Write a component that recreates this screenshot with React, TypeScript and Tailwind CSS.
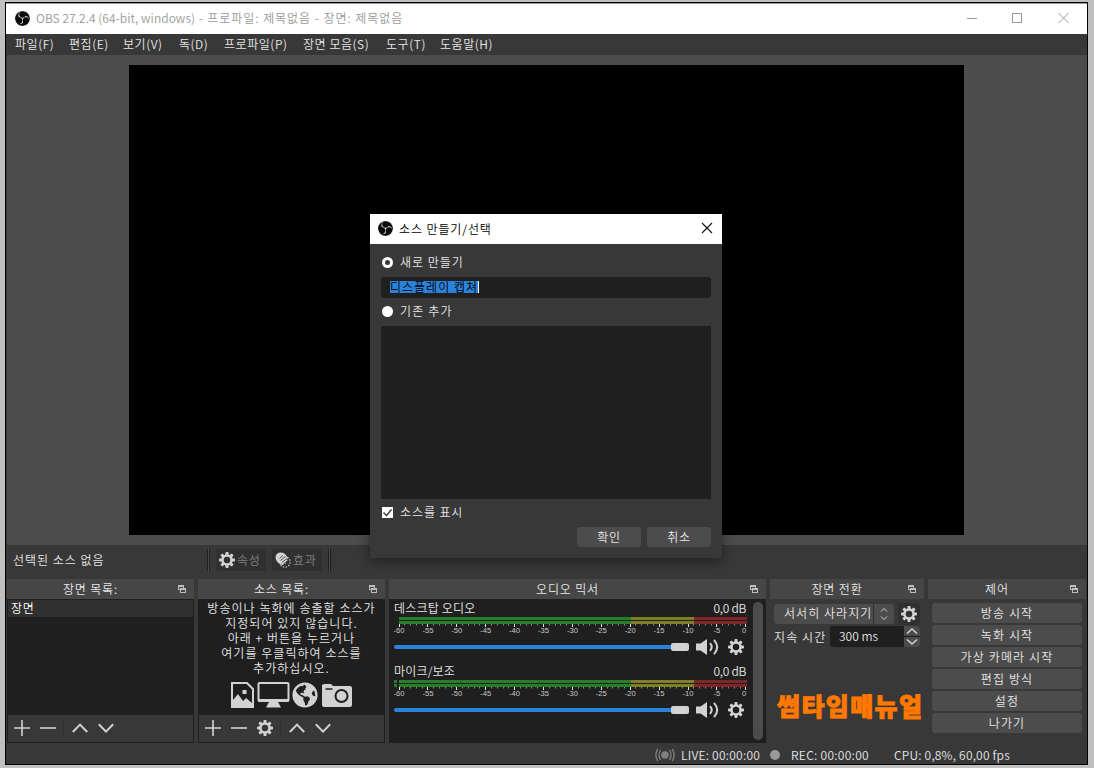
import React from 'react';
import { FaGlobeAmericas } from 'react-icons/fa';
import { SiObsstudio } from 'react-icons/si';

const TEETH = [0, 45, 90, 135, 180, 225, 270, 315];

const ObsLogo: React.FC = () => (
  <svg className="block w-[15px] h-[15px] shrink-0" viewBox="0 0 30 30">
    <circle cx="15" cy="15" r="15" fill="#0b0b0b" />
    <SiObsstudio x="-1.5" y="-1.5" size={33} color="#e8e8e8" />
  </svg>
);

const Gear: React.FC<{ className?: string }> = ({ className = '' }) => (
  <svg className={`block w-4 h-4 shrink-0 ${className}`} viewBox="0 0 32 32">
    <circle cx="16" cy="16" r="9" fill="none" stroke="#d2d2d2" strokeWidth="5" />
    {TEETH.map((a) => (
      <path key={a} transform={`rotate(${a} 16 16)`} d="M12.6 6 L13.4 0 H18.6 L19.4 6 Z" fill="#d2d2d2" />
    ))}
  </svg>
);

const Speaker: React.FC = () => (
  <svg className="block w-[23px] h-4 shrink-0" viewBox="0 0 23 16">
    <path d="M0 4.5 H4.5 L11 0 V16 L4.5 11.5 H0 Z" fill="#d2d2d2" />
    <path d="M14 4.2 Q17.4 8 14 11.8 M18 0.8 Q24.4 8 18 15.2" fill="none" stroke="#d2d2d2" strokeWidth="2" />
  </svg>
);

const PopOut: React.FC = () => (
  <svg className="absolute right-[8px] top-[6px] w-[8px] h-[8px]" viewBox="0 0 8 8">
    <path d="M0 0 H6 V3 H8 V8 H2 V5 H0 Z" fill="#bdbdbd" />
    <path d="M1 2 H5 V3 H2 V4 H1 Z M3 5 H7 V7 H3 Z" fill="#464646" />
  </svg>
);

const Plus = () => (
  <svg className="block w-4 h-4" viewBox="0 0 16 16"><path d="M8 0 V16 M0 8 H16" stroke="#d2d2d2" strokeWidth="1.6" /></svg>
);
const Minus = () => (
  <svg className="block w-4 h-4" viewBox="0 0 16 16"><path d="M0 8 H16" stroke="#d2d2d2" strokeWidth="1.6" /></svg>
);
const Up = () => (
  <svg className="block w-4 h-4" viewBox="0 0 16 16"><path d="M0.8 12 L8 4.6 L15.2 12" fill="none" stroke="#d2d2d2" strokeWidth="2" /></svg>
);
const Down = () => (
  <svg className="block w-4 h-4" viewBox="0 0 16 16"><path d="M0.8 4.2 L8 11.6 L15.2 4.2" fill="none" stroke="#d2d2d2" strokeWidth="2" /></svg>
);

const DockTitle: React.FC<{ title: string }> = ({ title }) => (
  <div className="relative h-5 shrink-0 bg-[#464646] flex items-center justify-center pr-5 pb-[2px] tracking-[0.85px]">
    {title}
    <PopOut />
  </div>
);

const MENU = [
  { label: '파일(F)', cls: 'w-[54px]' },
  { label: '편집(E)', cls: 'w-[54px]' },
  { label: '보기(V)', cls: 'w-[56px]' },
  { label: '독(D)', cls: 'w-[45px]' },
  { label: '프로파일(P)', cls: 'w-[79px]' },
  { label: '장면 모음(S)', cls: 'w-[83px]' },
  { label: '도구(T)', cls: 'w-[54px]' },
  { label: '도움말(H)', cls: 'w-[70px]' },
];

const CONTROLS = ['방송 시작', '녹화 시작', '가상 카메라 시작', '편집 방식', '설정', '나가기'];
const DB = [-60, -55, -50, -45, -40, -35, -30, -25, -20, -15, -10, -5, 0];

const Bar: React.FC = () => (
  <div className="flex h-[3px]">
    <div className="w-[232px] bg-[#267f26]" />
    <div className="w-[63px] bg-[#7f7f26]" />
    <div className="w-[53px] bg-[#7f2626]" />
  </div>
);

const Channel: React.FC<{ name: string; active?: boolean }> = ({ name, active }) => (
  <div className="h-[63px] w-[353px]">
    <div className="flex justify-between h-[18px] leading-[18px]">
      <span className="tracking-[0.2px]">{name}</span>
      <span className="tracking-[-0.3px] mr-px">0,0 dB</span>
    </div>
    <div className="flex justify-between">
      <div className="w-[3px] flex flex-col gap-px">
        {active && <><div className="h-[3px] bg-[#267f26]" /><div className="h-[3px] bg-[#267f26]" /></>}
      </div>
      <div className="w-[348px] flex flex-col gap-px">
        <Bar />
        <Bar />
      </div>
    </div>
    <svg className="block w-[358px] h-[12px]" viewBox="0 0 358 12">
      {Array.from({ length: 61 }, (_, i) => (
        <path key={i} d={`M${Math.floor(5 + i * 5.78) + 0.5} 0 V${i % 5 === 0 ? 3 : 1.5}`} stroke={i % 5 === 0 ? '#e0e0e0' : '#8a8a8a'} />
      ))}
      {DB.map((d, i) => (
        <text key={d} x={i === 12 ? 350 : 5 + i * 28.9} y="9" textAnchor="middle" fontSize="7.6" fill="#c8c8c8" fontFamily="Liberation Sans, sans-serif">{d}</text>
      ))}
    </svg>
    <div className="flex items-center h-[22px]">
      <div className="w-[277px] h-1 rounded-l bg-[#2a82da]" />
      <div className="w-[18px] h-2 rounded-[2px] bg-[#d2d2d2]" />
      <div className="ml-[7px]"><Speaker /></div>
      <Gear className="ml-[9px]" />
    </div>
  </div>
);

const SourceIcons: React.FC = () => (
  <svg className="block w-[122px] h-[28px] mt-[6px]" viewBox="0 0 122 28">
    <g fill="none" stroke="#d2d2d2" strokeWidth="2">
      <path d="M1 2 H16 L22 8 V26 H1 Z" />
      <rect x="27.500" y="2" width="30" height="18" rx="1" />
    </g>
    <path d="M2 25 V19 L7 13 L12 20 L15 17 L21 22 V25 Z M11.500 9 H15.500 V13 H11.500 Z" fill="#d2d2d2" />
    <path d="M27.500 18 H57.500 V21 H27.500 Z M38 21 H47 L50 26.500 H35 Z" fill="#d2d2d2" />
    <FaGlobeAmericas x="61" y="1" size={26} color="#d2d2d2" />
    <path d="M91 4 L93 3 H100 L102 5 H119 Q121 5 121 7 V24 Q121 26 119 26 H93 Q91 26 91 24 Z" fill="#d2d2d2" />
    <path d="M94.500 8 H101.500" stroke="#1f1f1f" strokeWidth="1.500" />
    <circle cx="110.500" cy="15" r="6" fill="none" stroke="#1f1f1f" strokeWidth="2" />
  </svg>
);

const Dialog: React.FC = () => (
  <div className="absolute left-[370px] top-[214px] w-[352px] h-[344px] bg-[#383838] shadow-[0_3px_12px_rgba(0,0,0,0.45)] flex flex-col">
    <div className="h-[30px] shrink-0 bg-white text-black flex items-center pl-[8px] pr-[9px] pb-[2px]">
      <ObsLogo />
      <span className="ml-[6px] grow tracking-[0.9px]">소스 만들기/선택</span>
      <svg className="block w-3 h-3" viewBox="0 0 12 12"><path d="M1 1 L11 11 M11 1 L1 11" stroke="#111" strokeWidth="1.1" /></svg>
    </div>
    <div className="px-[11px] flex flex-col">
      <label className="mt-[6px] h-[24px] flex items-center gap-[7px] pl-px tracking-[1px]">
        <span className="w-[11px] h-[11px] rounded-full border-[3px] border-white bg-[#383838]" />
        <span className="pb-px">새로 만들기</span>
      </label>
      <div className="mt-[3px] h-[21px] rounded-[3px] bg-[#1f1f1f] pl-[9px] pt-[4px] flex">
        <span className="h-[12px] leading-[11px] bg-[#2a82da] text-black border-r border-white tracking-[1px]">디스플레이 캡쳐</span>
      </div>
      <label className="mt-px h-[24px] flex items-center gap-[7px] pl-px tracking-[1.2px]">
        <span className="w-[11px] h-[11px] rounded-full bg-white" />
        <span className="pb-px">기존 추가</span>
      </label>
      <div className="mt-[3px] h-[173px] bg-[#1f1f1f]" />
      <label className="mt-px h-[24px] flex items-center gap-[7px] pl-px tracking-[0.9px]">
        <svg className="block w-[11px] h-[11px]" viewBox="0 0 11 11">
          <rect width="11" height="11" fill="#fff" />
          <path d="M1.500 5.500 L4.500 8.500 L9.500 2.500" fill="none" stroke="#383838" strokeWidth="1.400" />
        </svg>
        <span className="pb-px">소스를 표시</span>
      </label>
      <div className="mt-[3px] flex justify-end gap-[6px]">
        <div className="w-16 h-5 pb-[2px] rounded-[3px] bg-[#4c4c4c] flex items-center justify-center tracking-[0.6px]">확인</div>
        <div className="w-16 h-5 pb-[2px] rounded-[3px] bg-[#4c4c4c] flex items-center justify-center tracking-[0.6px]">취소</div>
      </div>
    </div>
  </div>
);

const App: React.FC = () => {
  return (
    <div className="w-[1094px] h-[768px] overflow-hidden bg-[#c0c0c0] pl-[5px] pt-[2px] text-[12px] leading-[15px] font-[350] text-[#e6e6e6] whitespace-nowrap font-['Noto_Sans_CJK_KR',sans-serif]">
      <div className="w-[1083px] h-[763px] border border-black bg-[#383838] flex flex-col">
        <div className="h-[31px] shrink-0 bg-white border-t border-[#999] text-[#999] flex items-center pl-[9px] pb-[2px]">
          <ObsLogo />
          <span className="ml-[6px] pb-px tracking-[0.05px]">OBS 27.2.4 (64-bit, windows)</span>
          <span className="grow pb-px tracking-[0.95px] whitespace-pre"> - 프로파일: 제목없음 - 장면: 제목없음</span>
          <svg className="block w-[102px] h-[12px] mr-[18px]" viewBox="0 0 102 12" fill="none" stroke="#999">
            <path d="M0 6.500 H10 M91.500 1 L101.500 11 M101.500 1 L91.500 11" />
            <rect x="45.500" y="1.500" width="9" height="9" />
          </svg>
        </div>
        <div className="h-[21px] shrink-0 bg-[#383838] flex items-center pl-[9px] pb-[2px] tracking-[0.55px]">
          {MENU.map((m) => (
            <span key={m.label} className={m.cls}>{m.label}</span>
          ))}
        </div>
        <div className="h-[490px] shrink-0 bg-[#4c4c4c] ml-px pl-[122px] pt-[10px]">
          <div className="w-[835px] h-[470px] bg-black" />
        </div>

        <div className="h-[34px] shrink-0 flex items-center pl-[7px] pb-[4px]">
          <span className="w-[194px] pb-[2px] tracking-[1px]">선택된 소스 없음</span>
          <span className="w-[3px] h-[22px] bg-[#4c4c4c] border-x border-[#1f1f1f]" />
          <div className="ml-[6px] w-[50px] h-[22px] rounded-[3px] bg-[#303030] flex items-center pl-[3px] text-[#808080]">
            <Gear /><span className="ml-[2px] pb-px tracking-[0.8px]">속성</span>
          </div>
          <div className="ml-[6px] w-[50px] h-[22px] rounded-[3px] bg-[#303030] flex items-center pl-[3px] text-[#808080]">
            <svg className="block w-4 h-4" viewBox="0 0 16 16">
              <circle cx="10" cy="10" r="5.200" fill="none" stroke="#bbb" strokeWidth="1.200" strokeDasharray="1.600 1.300" />
              <path d="M0.500 6 Q0.500 0.500 6 0.500 Q9 0.500 10.500 2.500 L13 6 L12 7.500 L12.500 9 L11 10 L11 11.500 L9 12 L8 13 Q2 12 0.500 6 Z" fill="#d2d2d2" />
              <path d="M4.500 6.500 L8 3.500 M5.500 8.500 L10.500 4.500 M7 10.500 L12 6.500 M8.500 12 L12.500 9" stroke="#303030" strokeWidth="0.800" />
            </svg>
            <span className="ml-[2px] pb-px tracking-[0.8px]">효과</span>
          </div>
          <span className="ml-[6px] w-[3px] h-[22px] bg-[#4c4c4c] border-x border-[#1f1f1f]" />
        </div>

        <div className="h-[164px] shrink-0 flex gap-1 pl-px">
          <div className="w-[187px] flex flex-col">
            <DockTitle title="장면 목록:" />
            <div className="h-[144px] border border-[#1f1f1f] bg-[#1f1f1f]">
              <div className="h-[17px] bg-[#303030] pl-[3px] text-white leading-[15px] tracking-[0.6px]">장면</div>
              <div className="mt-[98px] h-[27px] bg-[#383838] flex items-center pl-[6px] pb-px gap-[10px]">
                <Plus /><Minus />
                <span className="-ml-[3px] -mr-[2px] w-px h-[19px] bg-[#303030]" />
                <Up /><Down />
              </div>
            </div>
          </div>

          <div className="w-[187px] flex flex-col">
            <DockTitle title="소스 목록:" />
            <div className="h-[144px] border border-t-0 border-[#1f1f1f] bg-[#1f1f1f] flex flex-col">
              <div className="h-[116px] shrink-0 pt-px flex flex-col items-center text-center">
                <div className="tracking-[1.05px]">방송이나 녹화에 송출할 소스가<br />지정되어 있지 않습니다.<br />아래 + 버튼을 누르거나<br />여기를 우클릭하여 소스를<br />추가하십시오.</div>
                <SourceIcons />
              </div>
              <div className="h-[27px] bg-[#383838] flex items-center pl-[6px] pb-px gap-[10px]">
                <Plus /><Minus /><Gear />
                <span className="-ml-[3px] -mr-[2px] w-px h-[19px] bg-[#303030]" />
                <Up /><Down />
              </div>
            </div>
          </div>

          <div className="w-[377px] flex flex-col">
            <DockTitle title="오디오 믹서" />
            <div className="h-[144px] bg-[#1f1f1f] pl-[5px] pr-[3px] flex justify-between">
              <div>
                <Channel name="데스크탑 오디오" />
                <Channel name="마이크/보조" active />
              </div>
              <div className="mt-[3px] w-[10px] h-[138px] rounded-full bg-[#4c4c4c]" />
            </div>
          </div>

          <div className="w-[154px] flex flex-col">
            <DockTitle title="장면 전환" />
            <div className="pl-1 pt-[5px] flex">
              <div className="w-[120px] h-5 rounded-[3px] bg-[#4c4c4c] flex items-center">
                <span className="w-[100px] pl-[10px] h-full leading-[18px] border-r border-[#303030] tracking-[1.05px]">서서히 사라지기</span>
                <svg className="block w-[20px] h-[12px]" viewBox="0 0 20 12" fill="none" stroke="#d2d2d2">
                  <path d="M7 3.500 L10 0.500 L13 3.500 M7 8.500 L10 11.500 L13 8.500" />
                </svg>
              </div>
              <div className="ml-1 -mt-px w-[22px] h-[22px] rounded-[3px] bg-[#303030] flex items-center justify-center"><Gear /></div>
            </div>
            <div className="pl-1 pt-[1px] flex items-center">
              <span className="w-[56px] tracking-[1.1px]">지속 시간</span>
              <div className="w-[90px] h-[21px] rounded-[3px] bg-[#1f1f1f] flex items-center justify-between overflow-hidden">
                <span className="pl-[9px] pb-[2px]">300 ms</span>
                <svg className="block w-[16px] h-[21px]" viewBox="0 0 16 21" fill="none">
                  <path d="M0 0 H16 V10 H0 Z M0 11 H16 V21 H0 Z" fill="#4c4c4c" />
                  <path d="M3 7.500 L8 3 L13 7.500 M3 13.500 L8 18 L13 13.500" stroke="#d2d2d2" strokeWidth="1.600" />
                </svg>
              </div>
            </div>
            <div className="mt-[41px] pl-[7px] text-[25px] leading-[34px] font-black tracking-[1.4px] text-[#ff7800] [-webkit-text-stroke:0.9px_#ff7800]">썸타임매뉴얼</div>
          </div>

          <div className="w-[158px] flex flex-col">
            <DockTitle title="제어" />
            <div className="pl-1 pt-1 flex flex-col gap-[2px]">
              {CONTROLS.map((c) => (
                <div key={c} className="w-[150px] h-5 pb-[2px] rounded-[3px] bg-[#4c4c4c] flex items-center justify-center tracking-[1.15px]">{c}</div>
              ))}
            </div>
          </div>
        </div>

        <div className="grow flex items-center pl-[649px] pt-[3px]">
          <svg className="block w-[20px] h-[14px]" viewBox="0 0 20 14" fill="none" stroke="#808080" strokeWidth="1.300">
            <circle cx="10" cy="7" r="3.800" fill="#808080" stroke="none" />
            <path d="M5.500 2 Q2.500 7 5.500 12 M14.500 2 Q17.500 7 14.500 12 M2.800 0.800 Q-1 7 2.800 13.200 M17.200 0.800 Q21 7 17.200 13.200" />
          </svg>
          <span className="ml-[6px] w-[89px] pb-[2px] tracking-[0.25px]">LIVE: 00:00:00</span>
          <span className="w-[10px] h-[10px] rounded-full bg-[#999]" />
          <span className="ml-[11px] w-[103px] pb-[2px] tracking-[0.3px]">REC: 00:00:00</span>
          <span className="pb-[2px] tracking-[0.2px]">CPU: 0,8%, 60,00 fps</span>
        </div>
      </div>
      <Dialog />
    </div>
  );
};

export default App;
